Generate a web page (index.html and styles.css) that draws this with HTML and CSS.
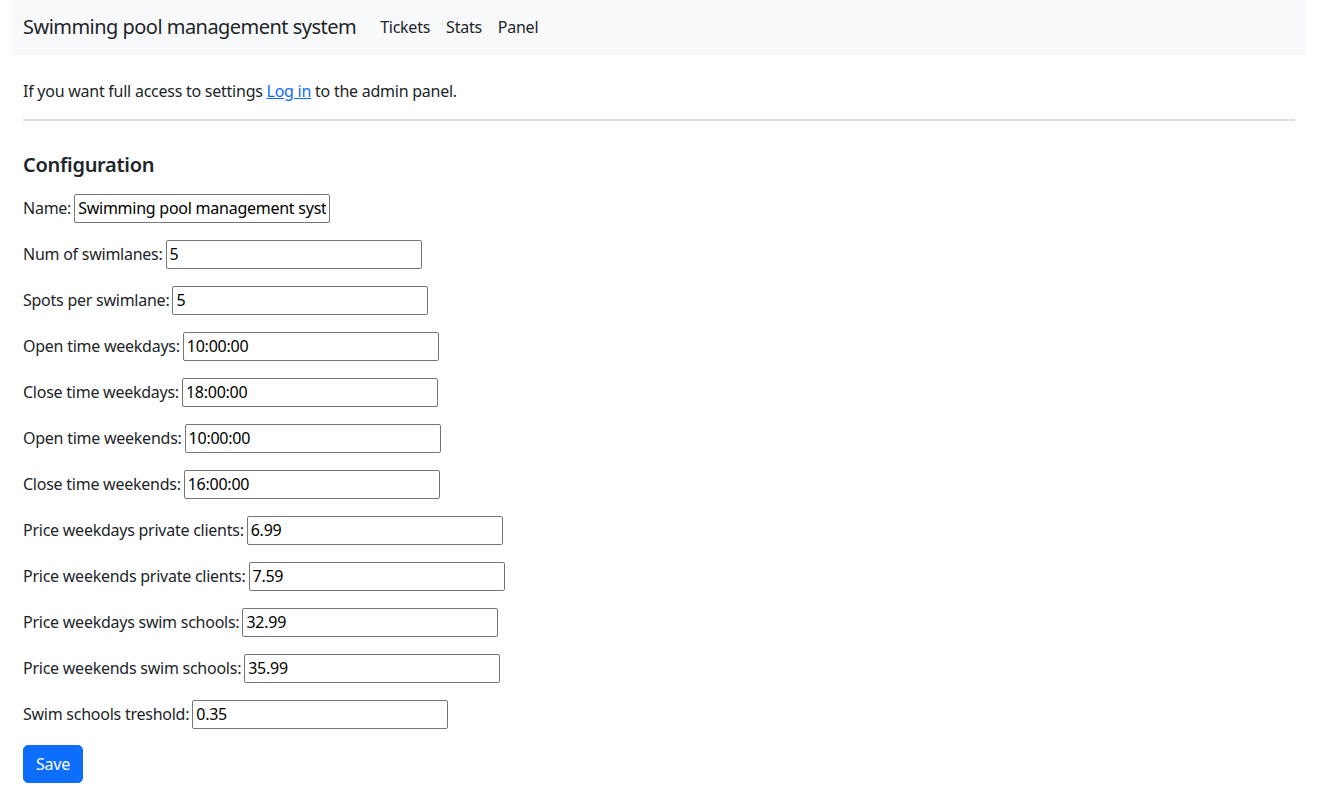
FILE: index.html
```html
<!DOCTYPE html>
<html lang="en">
<head>
<meta charset="utf-8">
<title>Swimming pool management system</title>
<link rel="stylesheet" href="styles.css">
</head>
<body>
<div class="page">
  <nav class="navbar">
    <a class="brand" href="#">Swimming pool management system</a>
    <ul class="nav">
      <li><a class="nav-link" href="#">Tickets</a></li>
      <li><a class="nav-link" href="#">Stats</a></li>
      <li><a class="nav-link" href="#">Panel</a></li>
    </ul>
  </nav>
  <main class="content">
    <p class="intro">If you want full access to settings <a href="#">Log in</a> to the admin panel.</p>
    <hr class="divider">
    <h5 class="heading">Configuration</h5>
    <form class="config">
      <p class="row"><label>Name:</label> <input type="text" value="Swimming pool management system"></p>
      <p class="row"><label>Num of swimlanes:</label> <input type="text" value="5"></p>
      <p class="row"><label>Spots per swimlane:</label> <input type="text" value="5"></p>
      <p class="row"><label>Open time weekdays:</label> <input type="text" value="10:00:00"></p>
      <p class="row"><label>Close time weekdays:</label> <input type="text" value="18:00:00"></p>
      <p class="row"><label>Open time weekends:</label> <input type="text" value="10:00:00"></p>
      <p class="row"><label>Close time weekends:</label> <input type="text" value="16:00:00"></p>
      <p class="row"><label>Price weekdays private clients:</label> <input type="text" value="6.99"></p>
      <p class="row"><label>Price weekends private clients:</label> <input type="text" value="7.59"></p>
      <p class="row"><label>Price weekdays swim schools:</label> <input type="text" value="32.99"></p>
      <p class="row"><label>Price weekends swim schools:</label> <input type="text" value="35.99"></p>
      <p class="row"><label>Swim schools treshold:</label> <input type="text" value="0.35"></p>
      <button class="btn" type="button">Save</button>
    </form>
  </main>
</div>
</body>
</html>
```
FILE: styles.css
```css
html, body {
  margin: 0;
  padding: 0;
  background: #fff;
}
body {
  font-family: "Noto Sans", "Open Sans", sans-serif;
  font-size: 16px;
  line-height: 1.5;
  letter-spacing: -0.25px;
  color: #212529;
}
.page {
  padding: 0 10px 0 11px;
}
.navbar {
  display: flex;
  align-items: center;
  background: #f8f9fa;
  padding: 7px 12px 9px;
  height: 39px;
}
.brand {
  font-size: 20px;
  line-height: 30px;
  letter-spacing: -0.53px;
  padding: 5px 0;
  margin-right: 16px;
  color: #212529;
  text-decoration: none;
}
.nav {
  display: flex;
  list-style: none;
  margin: 0;
  padding: 0;
}
.nav-link {
  display: block;
  padding: 8px;
  color: #212529;
  text-decoration: none;
}
.content {
  padding: 24px 12px 0;
}
.intro {
  margin: 0 0 16px;
}
.intro a {
  color: #0d6efd;
  text-decoration: underline;
}
.divider {
  margin: 0;
  border: 0;
  border-top: 2px solid #dedede;
}
.heading {
  margin: 32px 0 0;
  font-size: 20px;
  line-height: 24px;
  font-weight: 600;
  letter-spacing: -0.3px;
}
.config {
  margin-top: 16px;
}
.row {
  margin: 0 0 16px;
  height: 30px;
  display: flex;
  align-items: center;
  gap: 3px;
}
.row input {
  box-sizing: border-box;
  width: 256px;
  height: 29px;
  font-family: inherit;
  font-size: 16px;
  letter-spacing: -0.25px;
  color: #000;
  border: 1px solid #767676;
  border-radius: 2px;
  padding: 1px 3px;
  margin: 0;
}
.btn {
  font-family: inherit;
  font-size: 16px;
  line-height: 24px;
  letter-spacing: -0.25px;
  padding: 6px 12px;
  color: #fff;
  background: #0d6efd;
  border: 1px solid #0d6efd;
  border-radius: 5px;
}
```
